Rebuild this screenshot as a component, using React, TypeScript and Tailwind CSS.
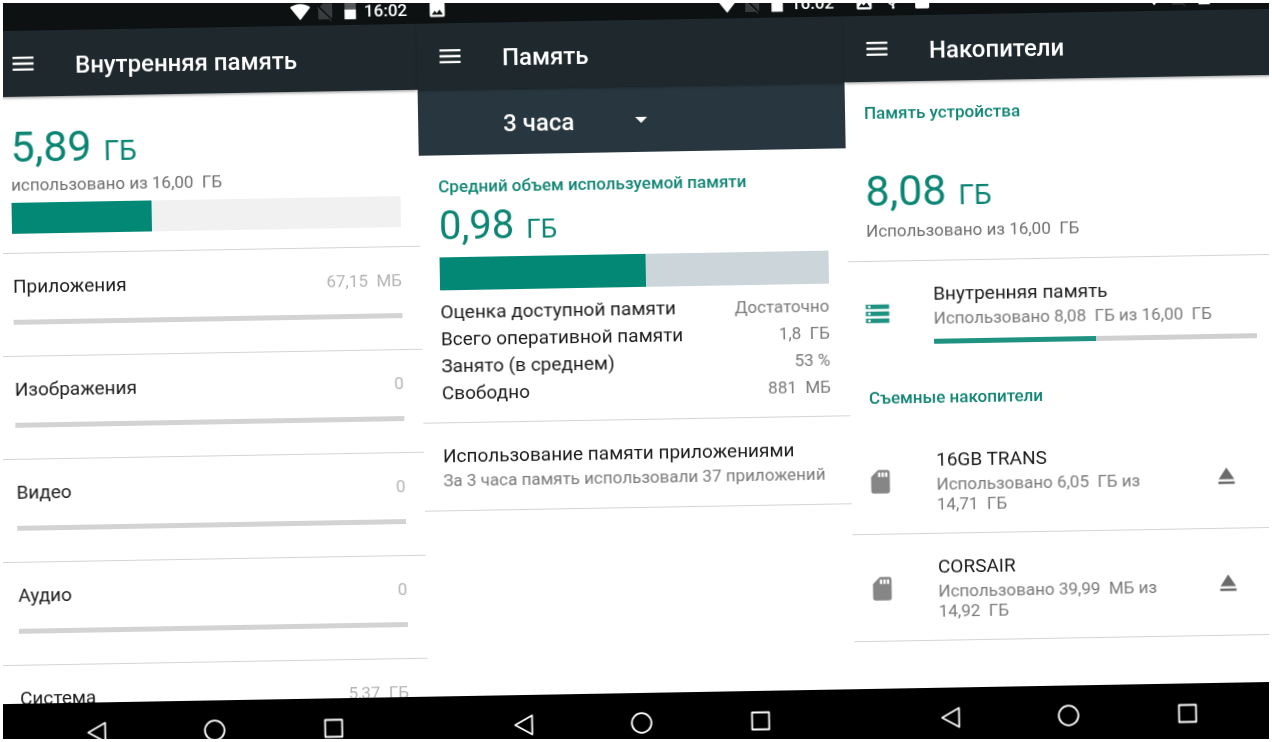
import type { ReactNode } from 'react';

const NB = '\u00a0\u00a0';

function WifiIcon() {
  return (
    <svg viewBox="0 0 22 22" className="h-[22px] w-[22px]" fill="#fff" aria-hidden="true">
      <path d="M11 19.4 0.9 6.8C3.4 4.6 7 3.2 11 3.2s7.600 1.400 10.100 3.600z" />
    </svg>
  );
}

function SimIcon() {
  return (
    <svg viewBox="0 0 22 22" className="h-[22px] w-[22px]" aria-hidden="true">
      <path d="M4 19V8l5-5h9v16z" fill="#373b3d" />
      <path d="M3.500 5.500 18.500 20.500" stroke="#0d1112" strokeWidth="2" />
      <path d="M3 7 17 20.500" stroke="#4c5052" strokeWidth="1" />
    </svg>
  );
}

function BatteryIcon() {
  return (
    <svg viewBox="0 0 22 22" className="h-[22px] w-[22px]" aria-hidden="true">
      <path d="M5.300 3h3.500V1h4.400v2h3.500v7H5.300z" fill="#55595a" />
      <path d="M5.300 9.600h11.400V19.300H5.300z" fill="#fff" />
    </svg>
  );
}

function PictureIcon() {
  return (
    <svg viewBox="0 0 16 16" className="h-4 w-4" aria-hidden="true">
      <path d="M2 0.500h12a1.500 1.500 0 0 1 1.500 1.500v12a1.500 1.500 0 0 1-1.500 1.500H2A1.500 1.500 0 0 1 .5 14V2A1.500 1.500 0 0 1 2 .5z" fill="#fff" />
      <path d="M2.500 13.200 5.500 9.300l2 2.500 2.800-3.600 3.400 5z" fill="#0d1112" />
    </svg>
  );
}

function UsbIcon() {
  return (
    <svg viewBox="0 0 16 16" className="h-4 w-4" fill="none" stroke="#fff" strokeWidth="1.600" aria-hidden="true">
      <path d="M8 1v13M8 12 4 9.500V6M8 10l4-2.500V4" />
      <circle cx="8" cy="14" r="1.400" fill="#fff" stroke="none" />
    </svg>
  );
}

function BagIcon() {
  return (
    <svg viewBox="0 0 16 16" className="h-4 w-4" fill="#fff" aria-hidden="true">
      <path d="M1 3h4V1h6v2h4v11a1.500 1.500 0 0 1-1.500 1.500h-11A1.500 1.500 0 0 1 1 14z" />
    </svg>
  );
}

function MenuIcon() {
  return (
    <svg viewBox="0 0 24 24" className="h-7 w-7" fill="#fff" aria-hidden="true">
      <path d="M3 18h18v-2H3v2zm0-5h18v-2H3v2zm0-7v2h18V6H3z" />
    </svg>
  );
}

function StorageIcon() {
  return (
    <svg viewBox="0 0 24 24" className="h-7 w-7" fill="#1f9282" aria-hidden="true">
      <path d="M2 20h20v-4H2v4zm2-3h2v2H4v-2zM2 4v4h20V4H2zm4 3H4V5h2v2zm-4 7h20v-4H2v4zm2-3h2v2H4v-2z" />
    </svg>
  );
}

function SdIcon() {
  return (
    <svg viewBox="0 0 24 24" className="h-7 w-7" fill="#868686" aria-hidden="true">
      <path d="M18 2h-8L4.020 8 4 20c0 1.100.9 2 2 2h12c1.100 0 2-.9 2-2V4c0-1.100-.9-2-2-2zm-6 6h-2V4h2v4zm3 0h-2V4h2v4zm3 0h-2V4h2v4z" />
    </svg>
  );
}

function EjectIcon() {
  return (
    <svg viewBox="0 0 24 24" className="h-7 w-7" fill="#6b6b6b" aria-hidden="true">
      <path d="M5 17h14v2H5zM12 5 5.330 15h13.340z" />
    </svg>
  );
}

function Screen({ title, notices, children }: { title: string; notices?: ReactNode; children: ReactNode }) {
  return (
    <section className="flex min-h-0 min-w-0 flex-col bg-white">
      <div className="flex h-[28px] shrink-0 items-center bg-[#0d1112] pr-[9px] pl-[13px]">
        <div className="flex flex-1 items-center gap-[13px]">{notices}</div>
        <div className="flex items-center gap-[3px]">
          <WifiIcon />
          <SimIcon />
          <BatteryIcon />
          <span className="text-[17px] leading-5 font-medium text-white">16:02</span>
        </div>
      </div>
      <header className="z-10 flex h-[66px] shrink-0 items-center gap-[38px] bg-[#1f282d] pl-[19px] shadow-[0_2px_3px_-1px_rgba(0,0,0,0.45)]">
        <button type="button" aria-label="Меню">
          <MenuIcon />
        </button>
        <h1 className="pt-[3px] text-2xl font-medium text-white">{title}</h1>
      </header>
      <main className="min-h-0 flex-1 overflow-hidden">{children}</main>
      <nav className="grid h-[59px] shrink-0 grid-cols-3 place-items-center bg-black px-[8.333%]">
        <button type="button" aria-label="Назад">
          <svg viewBox="0 0 24 24" className="h-6 w-6" fill="none" stroke="#fff" strokeWidth="1.800" strokeLinejoin="round" aria-hidden="true">
            <path d="M20.500 2.500v19L3.500 12z" />
          </svg>
        </button>
        <button type="button" aria-label="Домой">
          <svg viewBox="0 0 24 24" className="h-6 w-6" fill="none" stroke="#fff" strokeWidth="1.800" aria-hidden="true">
            <circle cx="12" cy="12" r="9.800" />
          </svg>
        </button>
        <button type="button" aria-label="Недавние">
          <svg viewBox="0 0 24 24" className="h-6 w-6" fill="none" stroke="#fff" strokeWidth="1.800" strokeLinejoin="round" aria-hidden="true">
            <path d="M3.500 3.500h17v17h-17z" />
          </svg>
        </button>
      </nav>
    </section>
  );
}

function Amount({ value, small }: { value: string; small?: boolean }) {
  return (
    <p className={small ? 'text-[40px] leading-[48px] text-[#0b8573]' : 'text-[43px] leading-[48px] text-[#0b8573]'}>
      {value}
      <span className={small ? 'ml-3 text-[26px] leading-none' : 'ml-3 text-[28px] leading-none'}>ГБ</span>
    </p>
  );
}

function SectionTitle({ children }: { children: ReactNode }) {
  return <h2 className="text-[17px] leading-5 font-medium text-[#118574]">{children}</h2>;
}

const categories = [
  { name: 'Приложения', size: `67,15${NB}МБ` },
  { name: 'Изображения', size: '0' },
  { name: 'Видео', size: '0' },
  { name: 'Аудио', size: '0' },
  { name: 'Система', size: `5,37${NB}ГБ` },
];

const memory = [
  { name: 'Оценка доступной памяти', value: 'Достаточно' },
  { name: 'Всего оперативной памяти', value: `1,8${NB}ГБ` },
  { name: 'Занято (в среднем)', value: '53 %' },
  { name: 'Свободно', value: `881${NB}МБ` },
];

const drives = [
  { name: '16GB TRANS', used: `Использовано 6,05${NB}ГБ из 14,71${NB}ГБ` },
  { name: 'CORSAIR', used: `Использовано 39,99${NB}МБ из 14,92${NB}ГБ` },
];

function InternalStorage() {
  return (
    <Screen title="Внутренняя память">
      <div className="px-[19px] pt-[26px] pb-[19px]">
        <Amount value="5,89" />
        <p className="mt-1 text-[17px] leading-5 text-[#6f6f6f]">использовано из 16,00{NB}ГБ</p>
        <div className="mt-2 h-[31px] bg-[#f1f1f1]" role="progressbar" aria-label="Занято" aria-valuenow={36}>
          <div className="h-full w-[36%] bg-[#048876]" />
        </div>
      </div>
      <ul>
        {categories.map((c) => (
          <li key={c.name} className="border-t border-[#d4d4d4] px-[19px] pt-[21px] pb-[31px]">
            <div className="flex items-baseline justify-between">
              <span className="text-[19px] leading-6 text-[#1c1c1c]">{c.name}</span>
              <span className="text-[17px] leading-5 text-[#b4b4b4]">{c.size}</span>
            </div>
            <div className="mt-[21px] h-[5px] bg-[#d3d3d3]" />
          </li>
        ))}
      </ul>
    </Screen>
  );
}

function Memory() {
  return (
    <Screen title="Память" notices={<PictureIcon />}>
      <div className="flex h-[66px] items-center bg-[#28373f] pl-[85px]">
        <div className="grid w-[150px] items-center">
          <select
            aria-label="Период"
            className="col-start-1 row-start-1 w-full appearance-none bg-transparent pt-[3px] text-2xl font-medium text-white outline-none"
          >
            <option>3 часа</option>
          </select>
          <svg viewBox="0 0 24 24" className="pointer-events-none col-start-1 row-start-1 h-6 w-6 justify-self-end" fill="#fff" aria-hidden="true">
            <path d="M6 10h12l-6 6z" />
          </svg>
        </div>
      </div>
      <div className="px-[19px] pt-[21px] pb-4">
        <SectionTitle>Средний объем используемой памяти</SectionTitle>
        <div className="mt-1.5">
          <Amount value="0,98" small />
        </div>
        <div className="mt-[7px] h-[33px] bg-[#ccd5d9]" role="progressbar" aria-label="Занято" aria-valuenow={53}>
          <div className="h-full w-[53%] bg-[#048876]" />
        </div>
        <dl className="mt-2">
          {memory.map((m) => (
            <div key={m.name} className="flex items-baseline justify-between">
              <dt className="text-[19px] leading-[27px] text-[#1c1c1c]">{m.name}</dt>
              <dd className="text-[17px] leading-5 text-[#7a7a7a]">{m.value}</dd>
            </div>
          ))}
        </dl>
      </div>
      <a href="#apps" className="block border-y border-[#d4d4d4] px-[19px] pt-[21px] pb-5">
        <span className="block text-[19px] leading-6 whitespace-nowrap text-[#1c1c1c]">Использование памяти приложениями</span>
        <span className="mt-[2px] block text-[17px] leading-5 whitespace-nowrap text-[#7a7a7a]">
          За 3 часа память использовали 37 приложений
        </span>
      </a>
    </Screen>
  );
}

function Drives() {
  return (
    <Screen
      title="Накопители"
      notices={
        <>
          <PictureIcon />
          <UsbIcon />
          <BagIcon />
        </>
      }
    >
      <div className="px-[19px] pt-[21px] pb-5">
        <SectionTitle>Память устройства</SectionTitle>
        <div className="mt-11">
          <Amount value="8,08" />
        </div>
        <p className="mt-[6px] text-[17px] leading-5 text-[#6f6f6f]">Использовано из 16,00{NB}ГБ</p>
      </div>
      <div className="flex items-center gap-[42px] border-t border-[#d4d4d4] pt-[21px] pr-[19px] pl-[15px]">
        <StorageIcon />
        <div className="min-w-0 flex-1">
          <h3 className="text-[19px] leading-6 text-[#1c1c1c]">Внутренняя память</h3>
          <p className="mt-[2px] text-[17px] leading-5 whitespace-nowrap text-[#7a7a7a]">
            Использовано 8,08{NB}ГБ из 16,00{NB}ГБ
          </p>
          <div className="mt-[11px] h-[5px] bg-[#d0d0d0]" role="progressbar" aria-label="Занято" aria-valuenow={50}>
            <div className="h-full w-1/2 bg-[#1f9282]" />
          </div>
        </div>
      </div>
      <div className="px-[19px] pt-[43px] pb-5">
        <SectionTitle>Съемные накопители</SectionTitle>
      </div>
      <ul>
        {drives.map((d) => (
          <li key={d.name} className="flex items-center border-b border-[#d4d4d4] pt-[21px] pr-[38px] pb-[19px] pl-[15px]">
            <SdIcon />
            <div className="ml-[42px] min-w-0 flex-1 pr-5">
              <h3 className="text-[19px] leading-6 text-[#1c1c1c]">{d.name}</h3>
              <p className="mt-[2px] text-[17px] leading-5 text-[#7a7a7a]">{d.used}</p>
            </div>
            <button type="button" aria-label={`Извлечь ${d.name}`}>
              <EjectIcon />
            </button>
          </li>
        ))}
      </ul>
    </Screen>
  );
}

export default function App() {
  return (
    <div className="h-screen bg-white p-[3px] font-[Roboto,sans-serif]">
      <div className="h-full overflow-hidden">
        <div className="-ml-[14px] grid h-[calc(100%+24px)] w-[calc(100%+15px)] origin-[14px_0] -rotate-1 grid-cols-3 grid-rows-[minmax(0,1fr)] will-change-transform">
          <InternalStorage />
          <Memory />
          <Drives />
        </div>
      </div>
    </div>
  );
}
